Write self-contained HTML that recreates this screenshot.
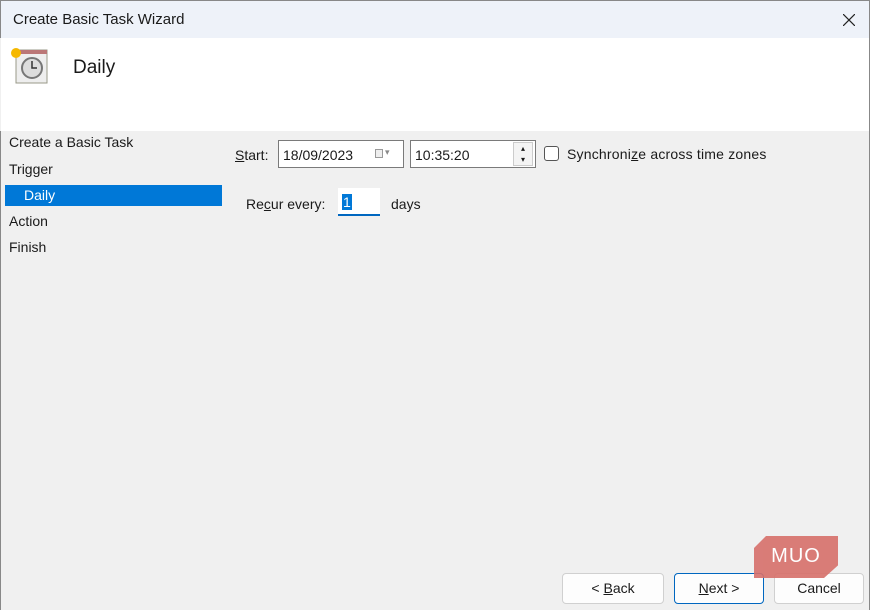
<!DOCTYPE html>
<html><head><style>
*{margin:0;padding:0;box-sizing:border-box}
body{width:870px;height:610px;background:#f0f0f0;font-family:"Liberation Sans",sans-serif;font-size:14px;color:#1a1a1a;position:relative;overflow:hidden}
.abs{position:absolute}
.title{left:0;top:0;width:870px;height:38px;background:#eef2f9;border:1px solid #888;border-bottom:none}
.hdr{left:1px;top:38px;width:868px;height:93px;background:#fff}
.box{background:#fff;border:1px solid #7a7a7a;height:28px}
.btn{background:#fdfdfd;border:1px solid #d0d0d0;border-radius:4px;height:31px;text-align:center;line-height:29px;font-size:14px}
</style></head><body>
<div class="abs title"><span class="abs" style="left:12px;top:10px;font-size:15px">Create Basic Task Wizard</span>
<svg class="abs" style="left:842px;top:13px" width="12" height="12"><path d="M0 0L12 12M12 0L0 12" stroke="#222" stroke-width="1.2"/></svg></div>
<div class="abs hdr"></div>
<svg class="abs" style="left:8px;top:44px" width="42" height="42">
<rect x="8" y="6" width="31" height="33" fill="#eee" stroke="#998" />
<rect x="8" y="6" width="31" height="4" fill="#b77"/>
<circle cx="24" cy="24" r="10" fill="#ddd" stroke="#777" stroke-width="2"/>
<path d="M24 17v7h5" stroke="#333" fill="none" stroke-width="1.5"/>
<circle cx="8" cy="9" r="5" fill="#f5b800"/></svg>
<div class="abs" style="left:73px;top:57px;font-size:19px">Daily</div>
<div class="abs" style="left:0;top:131px;width:1px;height:479px;background:#888"></div>
<div class="abs" style="left:869px;top:0;width:1px;height:610px;background:#888"></div>
<div class="abs" style="left:9px;top:134px">Create a Basic Task</div>
<div class="abs" style="left:9px;top:161px">Trigger</div>
<div class="abs" style="left:5px;top:185px;width:217px;height:21px;background:#0078d7;color:#fff;padding:2px 0 0 19px">Daily</div>
<div class="abs" style="left:9px;top:213px">Action</div>
<div class="abs" style="left:9px;top:239px">Finish</div>
<div class="abs" style="left:235px;top:147px"><u>S</u>tart:</div>
<div class="abs box" style="left:278px;top:140px;width:126px;padding:6px 4px">18/09/2023<span class="abs" style="left:96px;top:8px;width:8px;height:9px;border:1px solid #999;background:#eee"></span><span class="abs" style="left:106px;top:6px;color:#888;font-size:9px">▾</span></div>
<div class="abs box" style="left:410px;top:140px;width:126px;padding:6px 4px">10:35:20
<div class="abs" style="left:102px;top:1px;width:20px;height:24px;border:1px solid #ccc;font-size:8px;text-align:center;line-height:11px;background:#f4f4f4">▴<br>▾</div></div>
<div class="abs" style="left:544px;top:146px;width:15px;height:15px;border:1px solid #555;border-radius:3px;background:#fff"></div>
<div class="abs" style="left:567px;top:146px;letter-spacing:0.2px">Synchroni<u>z</u>e across time zones</div>
<div class="abs" style="left:246px;top:196px">Re<u>c</u>ur every:</div>
<div class="abs" style="left:338px;top:188px;width:42px;height:28px;background:#fff;border-bottom:2px solid #0067c0"><span class="abs" style="left:4px;top:6px;background:#0078d7;color:#fff;padding:0 1px">1</span></div>
<div class="abs" style="left:391px;top:196px">days</div>
<div class="abs btn" style="left:562px;top:573px;width:102px">&lt; <u>B</u>ack</div>
<div class="abs btn" style="left:674px;top:573px;width:90px;border:1px solid #0067c0"><u>N</u>ext &gt;</div>
<div class="abs btn" style="left:774px;top:573px;width:90px">Cancel</div>
<div class="abs" style="left:754px;top:536px;width:84px;height:42px;background:#d66f6a;opacity:.9;clip-path:polygon(12px 0,100% 0,100% 70%,70px 100%,0 100%,0 12px);color:#fff;font-size:20px;text-align:center;line-height:40px;letter-spacing:1px">MUO</div>
</body></html>
